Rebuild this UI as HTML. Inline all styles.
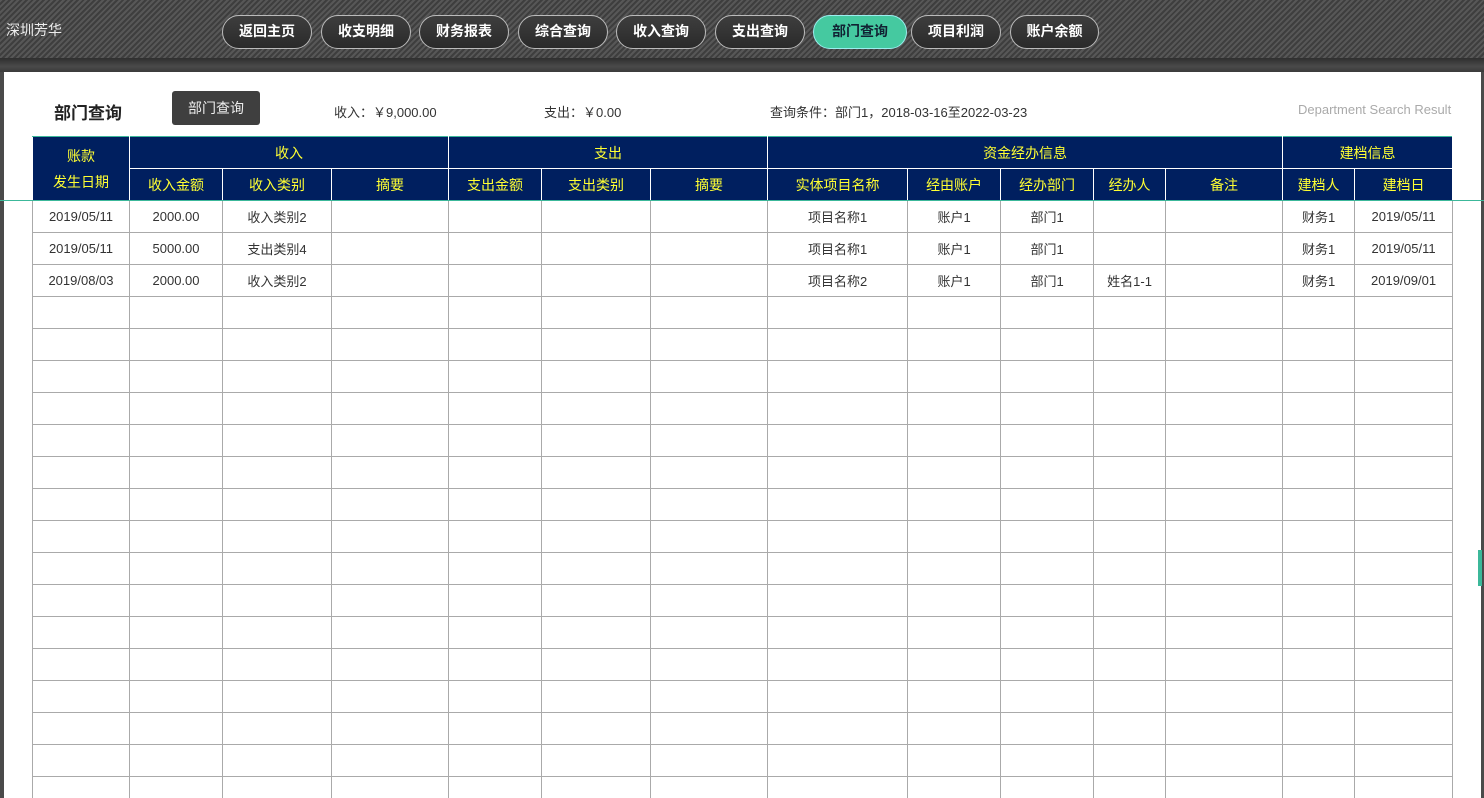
<!DOCTYPE html>
<html><head><meta charset="utf-8"><style>
*{margin:0;padding:0;box-sizing:border-box}
html,body{width:1484px;height:798px;overflow:hidden}
body{background:#4a4a4a;font-family:"Liberation Sans","Microsoft YaHei","Noto Sans CJK SC",sans-serif;position:relative}
.top{position:absolute;left:0;top:0;width:1484px;height:60px;background:repeating-linear-gradient(135deg,#575757 0 2px,#3e3e3e 2px 4px)}
.bar{position:absolute;left:0;top:58px;width:1484px;height:14px;background:linear-gradient(#2e2e2e,#4a4a4a 60%,#3a3a3a)}
.logo{position:absolute;left:6px;top:20px;color:#eee;font-size:14px}
.btn{position:absolute;top:15px;height:34px;border:1.5px solid #bbb;border-radius:17px;background:linear-gradient(#3e3e3e,#2a2a2a);color:#fff;font-size:14px;font-weight:bold;text-align:center;line-height:31px}
.btn.on{background:#45c9a0;color:#123;border-color:#9ee}
.panel{position:absolute;left:4px;top:72px;width:1477px;height:726px;background:#fff}
.ttl{position:absolute;left:54px;top:99px;font-size:17px;font-weight:bold;color:#222}
.qb{position:absolute;left:172px;top:91px;width:88px;height:34px;background:#3f3f3f;border-radius:3px;color:#eee;font-size:14px;text-align:center;line-height:34px}
.t{position:absolute;top:102px;font-size:13px;color:#333}
.wrap{position:absolute;left:0;top:0;width:1484px;height:798px;overflow:hidden}
table{position:absolute;left:32px;top:136px;border-collapse:collapse;table-layout:fixed;width:1420px}
th{background:#001f5f;color:#ffff33;font-weight:normal;font-size:14px;border:1px solid #fff;height:32px}
table tr:first-child th{border-top:1px solid #3cb89a}
td{border:1px solid #aaa;height:32px;font-size:13px;color:#333;text-align:center}
.hl{position:absolute;left:0;top:200px;width:1484px;height:1px;background:#3cb89a}
.mk{position:absolute;left:1478px;top:550px;width:4px;height:36px;background:#3cb89a}
</style></head><body>
<div class="wrap">
<div class="top"></div><div class="bar"></div>
<div class="logo">深圳芳华</div>
<div class="btn" style="left:222px;width:90px">返回主页</div>
<div class="btn" style="left:321px;width:90px">收支明细</div>
<div class="btn" style="left:419px;width:90px">财务报表</div>
<div class="btn" style="left:518px;width:90px">综合查询</div>
<div class="btn" style="left:616px;width:90px">收入查询</div>
<div class="btn" style="left:715px;width:90px">支出查询</div>
<div class="btn on" style="left:813px;width:94px">部门查询</div>
<div class="btn" style="left:911px;width:90px">项目利润</div>
<div class="btn" style="left:1010px;width:89px">账户余额</div>
<div class="panel"></div>
<div class="ttl">部门查询</div>
<div class="qb">部门查询</div>
<div class="t" style="left:334px">收入：￥9,000.00</div>
<div class="t" style="left:544px">支出：￥0.00</div>
<div class="t" style="left:770px">查询条件：部门1，2018-03-16至2022-03-23</div>
<div class="t" style="left:1298px;color:#aaa">Department Search Result</div>
<table>
<colgroup><col style="width:97px"><col style="width:93px"><col style="width:109px"><col style="width:117px"><col style="width:93px"><col style="width:109px"><col style="width:117px"><col style="width:140px"><col style="width:93px"><col style="width:93px"><col style="width:72px"><col style="width:117px"><col style="width:72px"><col style="width:98px"></colgroup>
<tr><th rowspan="2" style="line-height:26px">账款<br>发生日期</th><th colspan="3">收入</th><th colspan="3">支出</th><th colspan="5">资金经办信息</th><th colspan="2">建档信息</th></tr>
<tr><th>收入金额</th><th>收入类别</th><th>摘要</th><th>支出金额</th><th>支出类别</th><th>摘要</th><th>实体项目名称</th><th>经由账户</th><th>经办部门</th><th>经办人</th><th>备注</th><th>建档人</th><th>建档日</th></tr>
<tr><td>2019/05/11</td><td>2000.00</td><td>收入类别2</td><td></td><td></td><td></td><td></td><td>项目名称1</td><td>账户1</td><td>部门1</td><td></td><td></td><td>财务1</td><td>2019/05/11</td></tr>
<tr><td>2019/05/11</td><td>5000.00</td><td>支出类别4</td><td></td><td></td><td></td><td></td><td>项目名称1</td><td>账户1</td><td>部门1</td><td></td><td></td><td>财务1</td><td>2019/05/11</td></tr>
<tr><td>2019/08/03</td><td>2000.00</td><td>收入类别2</td><td></td><td></td><td></td><td></td><td>项目名称2</td><td>账户1</td><td>部门1</td><td>姓名1-1</td><td></td><td>财务1</td><td>2019/09/01</td></tr>
<tr><td></td><td></td><td></td><td></td><td></td><td></td><td></td><td></td><td></td><td></td><td></td><td></td><td></td><td></td></tr>
<tr><td></td><td></td><td></td><td></td><td></td><td></td><td></td><td></td><td></td><td></td><td></td><td></td><td></td><td></td></tr>
<tr><td></td><td></td><td></td><td></td><td></td><td></td><td></td><td></td><td></td><td></td><td></td><td></td><td></td><td></td></tr>
<tr><td></td><td></td><td></td><td></td><td></td><td></td><td></td><td></td><td></td><td></td><td></td><td></td><td></td><td></td></tr>
<tr><td></td><td></td><td></td><td></td><td></td><td></td><td></td><td></td><td></td><td></td><td></td><td></td><td></td><td></td></tr>
<tr><td></td><td></td><td></td><td></td><td></td><td></td><td></td><td></td><td></td><td></td><td></td><td></td><td></td><td></td></tr>
<tr><td></td><td></td><td></td><td></td><td></td><td></td><td></td><td></td><td></td><td></td><td></td><td></td><td></td><td></td></tr>
<tr><td></td><td></td><td></td><td></td><td></td><td></td><td></td><td></td><td></td><td></td><td></td><td></td><td></td><td></td></tr>
<tr><td></td><td></td><td></td><td></td><td></td><td></td><td></td><td></td><td></td><td></td><td></td><td></td><td></td><td></td></tr>
<tr><td></td><td></td><td></td><td></td><td></td><td></td><td></td><td></td><td></td><td></td><td></td><td></td><td></td><td></td></tr>
<tr><td></td><td></td><td></td><td></td><td></td><td></td><td></td><td></td><td></td><td></td><td></td><td></td><td></td><td></td></tr>
<tr><td></td><td></td><td></td><td></td><td></td><td></td><td></td><td></td><td></td><td></td><td></td><td></td><td></td><td></td></tr>
<tr><td></td><td></td><td></td><td></td><td></td><td></td><td></td><td></td><td></td><td></td><td></td><td></td><td></td><td></td></tr>
<tr><td></td><td></td><td></td><td></td><td></td><td></td><td></td><td></td><td></td><td></td><td></td><td></td><td></td><td></td></tr>
<tr><td></td><td></td><td></td><td></td><td></td><td></td><td></td><td></td><td></td><td></td><td></td><td></td><td></td><td></td></tr>
<tr><td></td><td></td><td></td><td></td><td></td><td></td><td></td><td></td><td></td><td></td><td></td><td></td><td></td><td></td></tr>
<tr><td></td><td></td><td></td><td></td><td></td><td></td><td></td><td></td><td></td><td></td><td></td><td></td><td></td><td></td></tr>
<tr><td></td><td></td><td></td><td></td><td></td><td></td><td></td><td></td><td></td><td></td><td></td><td></td><td></td><td></td></tr>
</table>
<div class="hl"></div>
<div class="mk"></div>
</div>
</body></html>
